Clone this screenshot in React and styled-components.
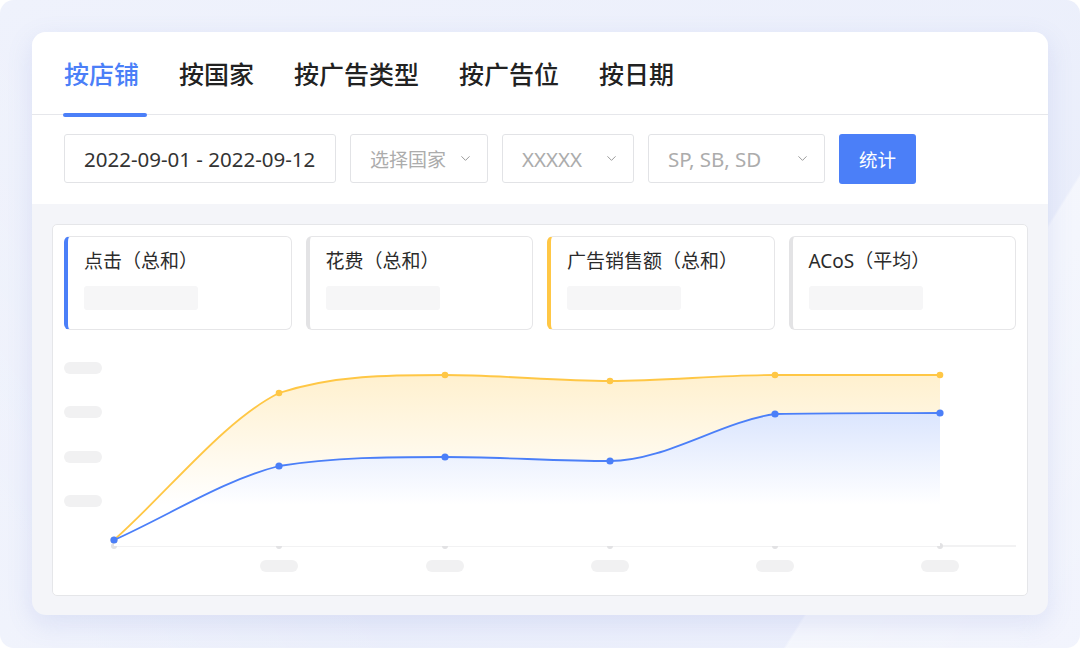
import React from "react";
import styled, { createGlobalStyle } from "styled-components";
import { ChevronDown } from "lucide-react";

const BLUE = "#4b7ff8";
const YELLOW = "#ffc745";
const FONT = `"Noto Sans", "Noto Sans CJK SC", sans-serif`;

const GlobalStyle = createGlobalStyle`
  body {
    margin: 0;
    font-family: ${FONT};
    background: #fff;
  }
`;

const Page = styled.div`
  width: 1080px;
  height: 648px;
  box-sizing: border-box;
  padding: 32px 32px 33px;
  display: flex;
  overflow: hidden;
  border-radius: 14px;
  background:
    linear-gradient(122deg, rgba(255, 255, 255, 0) 80%, rgba(255, 255, 255, 0.5) 80.2%, rgba(255, 255, 255, 0.25) 100%),
    linear-gradient(58deg, rgba(255, 255, 255, 0.3) 0%, rgba(255, 255, 255, 0) 28%),
    linear-gradient(160deg, #eff2fc 0%, #eaeefb 60%, #edf0fc 100%);
`;

const Card = styled.div`
  flex: 1;
  display: flex;
  flex-direction: column;
  border-radius: 14px;
  overflow: hidden;
  background: #f4f5f9;
  box-shadow: 0 8px 26px rgba(110, 128, 210, 0.16);
`;

const Tabs = styled.div`
  height: 82px;
  display: flex;
  align-items: center;
  gap: 40px;
  padding: 0 32px;
  background: #fff;
  border-bottom: 1px solid #e6e7eb;
`;

const Tab = styled.div`
  position: relative;
  height: 100%;
  display: flex;
  align-items: center;
  font-family: "Noto Sans CJK SC", sans-serif;
  font-size: 25px;
  font-weight: 500;
  color: ${(p) => (p.$active ? BLUE : "#222")};

  &::after {
    content: "";
    display: ${(p) => (p.$active ? "block" : "none")};
    position: absolute;
    left: -1px;
    bottom: -3px;
    width: calc(100% + 9px);
    height: 4px;
    border-radius: 2px;
    background: ${BLUE};
  }
`;

const Filters = styled.div`
  display: flex;
  gap: 14px;
  padding: 19px 32px 20px;
  background: #fff;
`;

const Field = styled.div`
  width: ${(p) => p.$w}px;
  height: 49px;
  box-sizing: border-box;
  display: flex;
  align-items: center;
  justify-content: space-between;
  padding: 0 14px 0 19px;
  border: 1px solid #e2e3e6;
  border-radius: 3px;
  background: #fff;
  font-size: ${(p) => p.$size || 20.5}px;
  color: ${(p) => (p.$placeholder ? "#acacac" : "#333")};
`;

const Button = styled.button`
  width: 77px;
  height: 50px;
  border: none;
  border-radius: 3px;
  background: ${BLUE};
  color: #fff;
  font-family: "Noto Sans CJK SC", sans-serif;
  font-size: 18.5px;
`;

const Body = styled.div`
  flex: 1;
  display: flex;
  padding: 20px 20px 19px;
`;

const Panel = styled.div`
  flex: 1;
  display: flex;
  flex-direction: column;
  padding: 11px 11px 0;
  background: #fff;
  border: 1px solid #e5e6e9;
  border-radius: 5px;
`;

const Metrics = styled.div`
  display: grid;
  grid-template-columns: repeat(4, 1fr);
  gap: 14px;
`;

const Metric = styled.div`
  height: 94px;
  box-sizing: border-box;
  padding: 11px 16px 0;
  border: 1px solid #e6e6e8;
  border-left: 4px solid ${(p) => p.$color};
  border-radius: 6px;
`;

const MetricTitle = styled.div`
  font-size: 19px;
  line-height: 26px;
  color: #2b2b2b;
`;

const Skeleton = styled.div`
  width: 114px;
  height: 24px;
  margin-top: 12px;
  border-radius: 3px;
  background: #f6f6f7;
`;

const Chart = styled.svg`
  display: block;
  width: 952px;
  height: 255px;
`;

// smooth line: averaged tangents, flat at turning points, no overshoot
const smoothPath = (pts) => {
  const n = pts.length;
  const slope = (a, b) => (b[1] - a[1]) / (b[0] - a[0]);
  const t = pts.map((p, i) => {
    if (i === 0) return slope(pts[0], pts[1]);
    if (i === n - 1) return slope(pts[n - 2], pts[n - 1]);
    const s0 = slope(pts[i - 1], p);
    const s1 = slope(p, pts[i + 1]);
    if (s0 * s1 <= 0) return 0;
    const h0 = p[0] - pts[i - 1][0];
    const h1 = pts[i + 1][0] - p[0];
    return (s0 * h1 + s1 * h0) / (h0 + h1);
  });
  const clamp = (v, a, b) => Math.min(Math.max(v, Math.min(a, b)), Math.max(a, b));
  let d = `M${pts[0][0]},${pts[0][1]}`;
  for (let i = 0; i < n - 1; i++) {
    const [x0, y0] = pts[i];
    const [x1, y1] = pts[i + 1];
    const dx = (x1 - x0) / 3;
    const c1 = clamp(y0 + dx * t[i], y0, y1);
    const c2 = clamp(y1 - dx * t[i + 1], y0, y1);
    d += ` C${x0 + dx},${c1} ${x1 - dx},${c2} ${x1},${y1}`;
  }
  return d;
};

const xs = [114, 279, 445, 610, 775, 940];
const sales = [540, 393, 375, 381, 375, 375].map((y, i) => [xs[i], y]);
const clicks = [540, 466, 457, 461, 414, 413].map((y, i) => [xs[i], y]);
const yTicks = [368, 412, 457, 501];

const area = (pts) => `${smoothPath(pts)} L940,546 L114,546 Z`;

const LineChart = () => (
  <Chart viewBox="64 330 952 255">
    <defs>
      <linearGradient id="gy" x1="0" y1="375" x2="0" y2="505" gradientUnits="userSpaceOnUse">
        <stop offset="0" stopColor={YELLOW} stopOpacity="0.26" />
        <stop offset="1" stopColor={YELLOW} stopOpacity="0" />
      </linearGradient>
      <linearGradient id="gb" x1="0" y1="413" x2="0" y2="505" gradientUnits="userSpaceOnUse">
        <stop offset="0" stopColor={BLUE} stopOpacity="0.2" />
        <stop offset="1" stopColor={BLUE} stopOpacity="0" />
      </linearGradient>
    </defs>
    {yTicks.map((y) => (
      <rect key={y} x="64" y={y - 6} width="38" height="12" rx="6" fill="#f1f1f2" />
    ))}
    {xs.slice(1).map((x) => (
      <rect key={x} x={x - 19} y="560" width="38" height="12" rx="6" fill="#f1f1f2" />
    ))}
    <line x1="114" y1="546" x2="1016" y2="546" stroke="#e6e6e8" strokeWidth="1.2" />
    {xs.map((x) => (
      <circle key={x} cx={x} cy="546" r="3" fill="#e2e2e4" />
    ))}
    <path d={area(sales)} fill="url(#gy)" />
    <path d={area(clicks)} fill="#fff" />
    <path d={area(clicks)} fill="url(#gb)" />
    <path d={smoothPath(sales)} fill="none" stroke={YELLOW} strokeWidth="1.8" />
    <path d={smoothPath(clicks)} fill="none" stroke={BLUE} strokeWidth="1.8" />
    {sales.map(([x, y]) => (
      <circle key={`s${x}`} cx={x} cy={y} r="3.3" fill={YELLOW} />
    ))}
    {clicks.map(([x, y]) => (
      <circle key={`c${x}`} cx={x} cy={y} r="3.6" fill={BLUE} />
    ))}
  </Chart>
);

const tabs = ["按店铺", "按国家", "按广告类型", "按广告位", "按日期"];
const metrics = [
  { title: "点击（总和）", color: BLUE },
  { title: "花费（总和）", color: "#e3e3e5" },
  { title: "广告销售额（总和）", color: YELLOW },
  { title: "ACoS（平均）", color: "#e3e3e5" },
];

const Chevron = () => <ChevronDown size={15} strokeWidth={1.6} color="#9a9a9a" />;

const App = () => (
  <>
    <GlobalStyle />
    <Page>
      <Card>
        <Tabs>
          {tabs.map((t, i) => (
            <Tab key={t} $active={i === 0}>
              {t}
            </Tab>
          ))}
        </Tabs>
        <Filters>
          <Field $w={272}>2022-09-01 - 2022-09-12</Field>
          <Field $w={138} $size={19} $placeholder>
            选择国家
            <Chevron />
          </Field>
          <Field $w={132} $placeholder>
            XXXXX
            <Chevron />
          </Field>
          <Field $w={177} $placeholder>
            SP, SB, SD
            <Chevron />
          </Field>
          <Button>统计</Button>
        </Filters>
        <Body>
          <Panel>
            <Metrics>
              {metrics.map((m) => (
                <Metric key={m.title} $color={m.color}>
                  <MetricTitle>{m.title}</MetricTitle>
                  <Skeleton />
                </Metric>
              ))}
            </Metrics>
            <LineChart />
          </Panel>
        </Body>
      </Card>
    </Page>
  </>
);

export default App;
